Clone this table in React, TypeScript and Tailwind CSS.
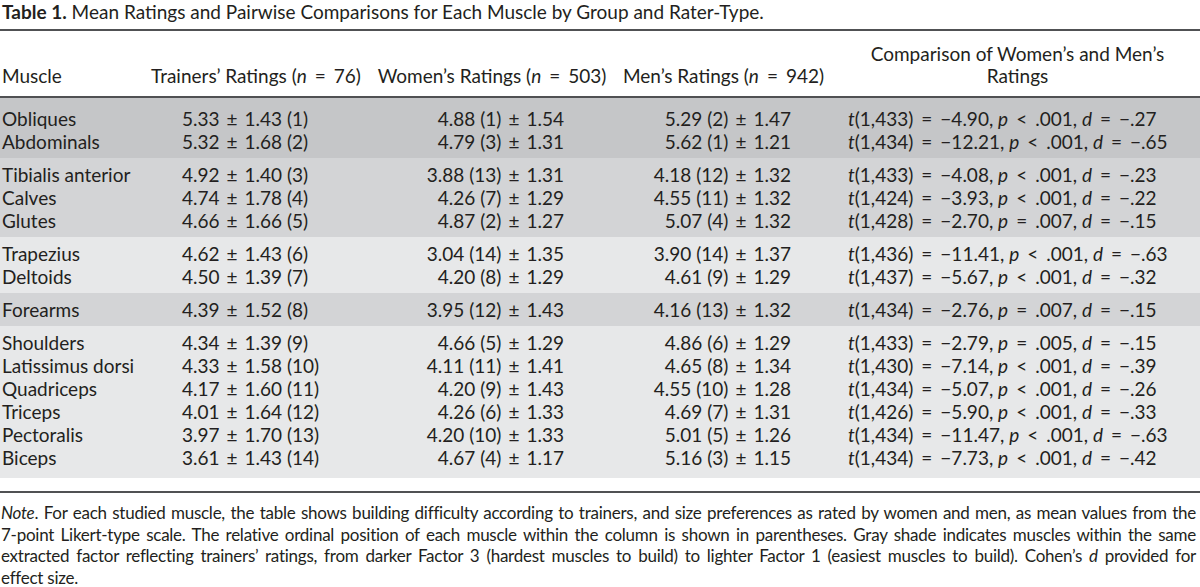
import React from "react";

type Row = {
  m: string;
  t: [string, string, string];
  w: [string, string, string];
  mn: [string, string, string];
  df: string;
  tv: string;
  pOp: string;
  p: string;
  d: string;
};

const R = (
  m: string,
  t: [string, string, string],
  w: [string, string, string],
  mn: [string, string, string],
  df: string,
  tv: string,
  pOp: string,
  p: string,
  d: string
): Row => ({ m, t, w, mn, df, tv, pOp, p, d });

const groups: { bg: string; pad: string; rows: Row[] }[] = [
  {
    bg: "bg-[#c5c6c8]",
    pad: "pt-[9px] pb-[5px]",
    rows: [
      R("Obliques", ["5.33", "1.43", "1"], ["4.88", "1", "1.54"], ["5.29", "2", "1.47"], "1,433", "−4.90", "<", ".001", "−.27"),
      R("Abdominals", ["5.32", "1.68", "2"], ["4.79", "3", "1.31"], ["5.62", "1", "1.21"], "1,434", "−12.21", "<", ".001", "−.65"),
    ],
  },
  {
    bg: "bg-[#d3d4d6]",
    pad: "py-[5px]",
    rows: [
      R("Tibialis anterior", ["4.92", "1.40", "3"], ["3.88", "13", "1.31"], ["4.18", "12", "1.32"], "1,433", "−4.08", "<", ".001", "−.23"),
      R("Calves", ["4.74", "1.78", "4"], ["4.26", "7", "1.29"], ["4.55", "11", "1.32"], "1,424", "−3.93", "<", ".001", "−.22"),
      R("Glutes", ["4.66", "1.66", "5"], ["4.87", "2", "1.27"], ["5.07", "4", "1.32"], "1,428", "−2.70", "=", ".007", "−.15"),
    ],
  },
  {
    bg: "bg-[#e7e8e9]",
    pad: "py-[5px]",
    rows: [
      R("Trapezius", ["4.62", "1.43", "6"], ["3.04", "14", "1.35"], ["3.90", "14", "1.37"], "1,436", "−11.41", "<", ".001", "−.63"),
      R("Deltoids", ["4.50", "1.39", "7"], ["4.20", "8", "1.29"], ["4.61", "9", "1.29"], "1,437", "−5.67", "<", ".001", "−.32"),
    ],
  },
  {
    bg: "bg-[#d3d4d6]",
    pad: "py-[5px]",
    rows: [
      R("Forearms", ["4.39", "1.52", "8"], ["3.95", "12", "1.43"], ["4.16", "13", "1.32"], "1,434", "−2.76", "=", ".007", "−.15"),
    ],
  },
  {
    bg: "bg-[#e7e8e9]",
    pad: "pt-[5px] pb-[9px]",
    rows: [
      R("Shoulders", ["4.34", "1.39", "9"], ["4.66", "5", "1.29"], ["4.86", "6", "1.29"], "1,433", "−2.79", "=", ".005", "−.15"),
      R("Latissimus dorsi", ["4.33", "1.58", "10"], ["4.11", "11", "1.41"], ["4.65", "8", "1.34"], "1,430", "−7.14", "<", ".001", "−.39"),
      R("Quadriceps", ["4.17", "1.60", "11"], ["4.20", "9", "1.43"], ["4.55", "10", "1.28"], "1,434", "−5.07", "<", ".001", "−.26"),
      R("Triceps", ["4.01", "1.64", "12"], ["4.26", "6", "1.33"], ["4.69", "7", "1.31"], "1,426", "−5.90", "<", ".001", "−.33"),
      R("Pectoralis", ["3.97", "1.70", "13"], ["4.20", "10", "1.33"], ["5.01", "5", "1.26"], "1,434", "−11.47", "<", ".001", "−.63"),
      R("Biceps", ["3.61", "1.43", "14"], ["4.67", "4", "1.17"], ["5.16", "3", "1.15"], "1,434", "−7.73", "<", ".001", "−.42"),
    ],
  },
];

const cols = "grid grid-cols-[140px_232px_240px_223px_365px]";

function PM() {
  return <span className="px-[7px]">±</span>;
}

function Op({ c }: { c: string }) {
  return <span className="px-[8px]">{c}</span>;
}

function DataRow({ r }: { r: Row }) {
  return (
    <div className={`${cols} h-[23px] leading-[23px] whitespace-nowrap`}>
      <div className="pl-[2px]">{r.m}</div>
      <div className="pl-[42px]">
        {r.t[0]}
        <PM />
        {r.t[1]} ({r.t[2]})
      </div>
      <div className="pr-[48px] text-right">
        {r.w[0]} ({r.w[1]})
        <PM />
        {r.w[2]}
      </div>
      <div className="pr-[44px] text-right">
        {r.mn[0]} ({r.mn[1]})
        <PM />
        {r.mn[2]}
      </div>
      <div className="pl-[13px]">
        <i>t</i>({r.df})
        <Op c="=" />
        {r.tv}, <i>p</i>
        <Op c={r.pOp} />
        {r.p}, <i>d</i>
        <Op c="=" />
        {r.d}
      </div>
    </div>
  );
}

const noteLines = [
  "For each studied muscle, the table shows building difficulty according to trainers, and size preferences as rated by women and men, as mean values from the",
  "7-point Likert-type scale. The relative ordinal position of each muscle within the column is shown in parentheses. Gray shade indicates muscles within the same",
];

export default function App() {
  return (
    <div className="w-[1200px] h-[587px] overflow-hidden bg-white text-[#231f20] font-['Lato',sans-serif] text-[19px]">
      <div className="h-[29px] pl-[2px] text-[19px] leading-[24px] whitespace-nowrap">
        <span className="font-bold">Table 1.</span> Mean Ratings and Pairwise Comparisons for Each Muscle by Group and Rater-Type.
      </div>
      <div className="h-[2px] bg-[#505153]" />
      <div className={`${cols} h-[65px] pt-[12px] leading-[22px] whitespace-nowrap`}>
        <div className="pl-[2px] self-end pb-[9px]">Muscle</div>
        <div className="text-center self-end pb-[9px]">
          Trainers’ Ratings (<i>n</i>
          <Op c="=" />
          76)
        </div>
        <div className="text-center self-end pb-[9px]">
          Women’s Ratings (<i>n</i>
          <Op c="=" />
          503)
        </div>
        <div className="text-center self-end pb-[9px]">
          Men’s Ratings (<i>n</i>
          <Op c="=" />
          942)
        </div>
        <div className="text-center self-end pb-[9px]">
          <div>Comparison of Women’s and Men’s</div>
          <div>Ratings</div>
        </div>
      </div>
      <div className="h-[2px] bg-[#505153]" />
      {groups.map((g, i) => (
        <div key={i} className={`${g.bg} ${g.pad}`}>
          {g.rows.map((r) => (
            <DataRow key={r.m} r={r} />
          ))}
        </div>
      ))}
      <div className="h-[13px]" />
      <div className="h-[2px] bg-[#505153]" />
      <div className="pt-[9px] leading-[21.5px] text-[17px] tracking-[-0.25px] pr-[4px] pl-[1px]">
        <div className="text-justify [text-align-last:justify] whitespace-nowrap">
          <i>Note</i>. {noteLines[0]}
        </div>
        <div className="text-justify [text-align-last:justify] whitespace-nowrap">{noteLines[1]}</div>
        <div className="text-justify [text-align-last:justify] whitespace-nowrap">
          extracted factor reflecting trainers’ ratings, from darker Factor 3 (hardest muscles to build) to lighter Factor 1 (easiest muscles to build). Cohen’s <i>d</i> provided for
        </div>
        <div>effect size.</div>
      </div>
    </div>
  );
}
